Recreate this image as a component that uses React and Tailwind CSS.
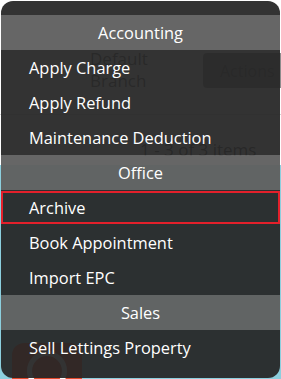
const groups = [
  { title: 'Accounting', items: ['Apply Charge', 'Apply Refund', 'Maintenance Deduction'] },
  { title: 'Office', items: ['Archive', 'Book Appointment', 'Import EPC'] },
  { title: 'Sales', items: ['Sell Lettings Property'] },
]

// Page content that shows faintly through the menu.
function Backdrop() {
  return (
    <div className="flex h-full flex-col">
      <div className="flex h-[115px] items-start pl-[90px] pt-[48px] border-b border-[#d4d4d4]">
        <div className="w-[100px] text-[17px] leading-[22px] text-[#555]">
          Default
          <br />
          Branch
        </div>
        <div className="ml-auto -mr-[12px] mt-[5px] flex h-[35px] w-[90px] items-center rounded-[4px] bg-[#8c8c8c] pl-[17px] text-[16px] text-[#555]">
          Actions
        </div>
      </div>
      <div className="h-[50px] pl-[140px] pt-[24px] text-[17px] leading-[22px] text-[#444]">
        1 - 3 of 3 items
      </div>
      <div className="flex flex-1 items-end bg-[#8ccfde] pl-[12px]">
        <div className="flex h-[36px] w-[70px] justify-center rounded-t-[12px] bg-[#e24a2c] pt-[8px]">
          <div className="h-[40px] w-[40px] rounded-full border-[5px] border-white" />
        </div>
      </div>
    </div>
  )
}

export default function App() {
  return (
    <div
      className="relative h-[379px] w-[281px] overflow-hidden bg-white"
      style={{ fontFamily: '"Open Sans", "Noto Sans", sans-serif' }}
    >
      <Backdrop />

      {/* Context menu */}
      <div className="absolute left-[1px] top-[1px] h-[377px] w-[279px] overflow-hidden rounded-[12px] bg-[rgba(38,38,38,0.94)] pt-[14px] text-[16.4px] text-white">
        {groups.map((g) => (
          <div key={g.title}>
            <div className="flex h-[35px] items-center justify-center bg-white/25 pt-[2px]">
              {g.title}
            </div>
            {g.items.map((label) =>
              label === 'Archive' ? (
                <div
                  key={label}
                  className="my-px flex h-[33px] items-center border-2 border-[#e4202b] pl-[26px] pt-[2px]"
                >
                  {label}
                </div>
              ) : (
                <div key={label} className="flex h-[35px] items-center pl-[28px] pt-[2px]">
                  {label}
                </div>
              )
            )}
          </div>
        ))}
      </div>
    </div>
  )
}
